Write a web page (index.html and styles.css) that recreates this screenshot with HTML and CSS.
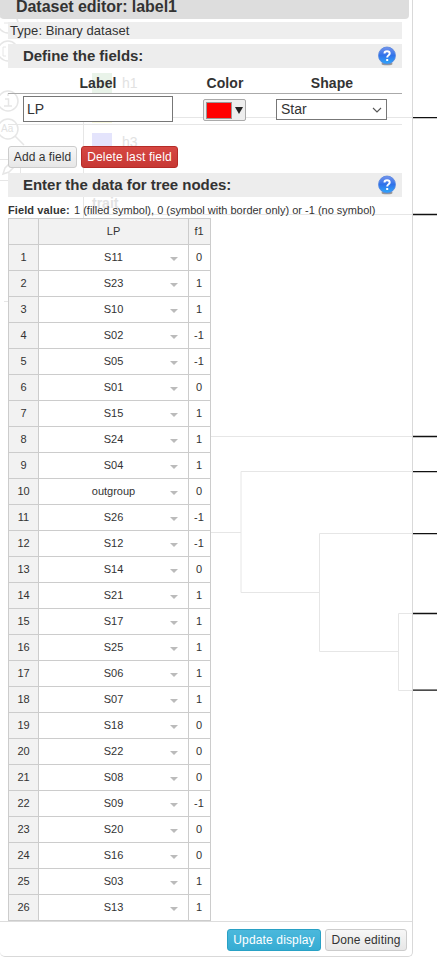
FILE: index.html
```html
<!DOCTYPE html>
<html lang="en">
<head>
<meta charset="utf-8">
<title>Dataset editor</title>
<link rel="stylesheet" href="styles.css">
</head>
<body>
<svg class="tree" width="437" height="979" viewBox="0 0 437 979" fill="none">
  <g class="faint">
    <rect x="92" y="73" width="20" height="20" fill="#e9f3e9"/>
    <rect x="92" y="103" width="20" height="20" fill="#fafae0"/>
    <rect x="92" y="133" width="20" height="20" fill="#e4e4fc"/>
    <path d="M83.500 118V218M83 117.500H412M8 124.500H402M83 214.500H412M0 159.500H20M20.500 159V180M0 180.500H8"/>
    <circle cx="8" cy="23" r="10"/><path d="M4 23H12"/>
    <circle cx="8" cy="51" r="10"/><path d="M6 47H3V56H6M9 47H12V56H9"/>
    <circle cx="8" cy="101" r="10"/><path class="bold" d="M5 99H8.500V106M4 106H12M8 93.500V96"/>
    <circle cx="8" cy="129" r="10"/><path class="bold" d="M15 136L24 145"/>
    <path class="bold" d="M3 174L5 168L13 160L17 164L9 172ZM11 162L15 166"/>
    <path d="M4 301.500H8"/>
    <path d="M211 436.500H412M211 532.500H241M412 471.500H241V592.500H319.500M412 533.500H319.500V651.500H398.500M412 613.500H398.500V690.500H412"/>
  </g>
  <g class="branches"><path d="M413 117.600H437M413 214.500H437M413 436.500H437M413 471.700H437M413 533.700H437M413 613.500H437M413 690.200H437"/></g>
  <g class="legend"><text x="122" y="88">h1</text><text x="122" y="147">h3</text><text class="small" x="1" y="132">Aa</text><text class="trait" x="92" y="208">trait</text></g>
</svg>
<main class="dialog">
  <h1 class="title">Dataset editor: label1</h1>
  <div class="content">
    <div class="type">Type: Binary dataset</div>
    <div class="section"><h2>Define the fields:</h2>
      <svg class="help" width="20" height="20" viewBox="0 0 20 20"><defs><linearGradient id="blue" x1="0" y1="0" x2="0" y2="1"><stop stop-color="#7593ec"/><stop offset=".5" stop-color="#2f72ea"/><stop offset="1" stop-color="#2fa8fa"/></linearGradient></defs><ellipse cx="10" cy="17.800" rx="5.500" ry="1.500" fill="#999"/><circle cx="10" cy="9.500" r="8.500" fill="url(#blue)" stroke="#5585dd" stroke-width=".8"/><path d="M7.500 7.500Q7.500 5.300 10 5.300Q12.700 5.300 12.700 7.500Q12.700 8.700 11.300 9.500Q10.200 10.100 10.200 11.500M10.200 13V15" fill="none" stroke="#fff" stroke-width="2"/></svg>
    </div>
    <div class="fields head"><b>Label</b><b>Color</b><b>Shape</b></div>
    <div class="fields controls">
      <div class="text-input">LP</div>
      <div class="color"><span class="swatch"></span><span class="arrow"></span></div>
      <div class="select">Star<svg width="10" height="6" viewBox="0 0 10 6"><path d="M1 1L5 5L9 1" fill="none" stroke="#555" stroke-width="1.100"/></svg></div>
    </div>
    <div class="actions"><span class="btn add">Add a field</span><span class="btn danger">Delete last field</span></div>
    <div class="section"><h2>Enter the data for tree nodes:</h2>
      <svg class="help" width="20" height="20" viewBox="0 0 20 20"><ellipse cx="10" cy="17.800" rx="5.500" ry="1.500" fill="#999"/><circle cx="10" cy="9.500" r="8.500" fill="url(#blue)" stroke="#5585dd" stroke-width=".8"/><path d="M7.500 7.500Q7.500 5.300 10 5.300Q12.700 5.300 12.700 7.500Q12.700 8.700 11.300 9.500Q10.200 10.100 10.200 11.500M10.200 13V15" fill="none" stroke="#fff" stroke-width="2"/></svg>
    </div>
    <div class="hint"><b>Field value:</b><span>1 (filled symbol), 0 (symbol with border only) or -1 (no symbol)</span></div>
    <table class="grid">
      <thead><tr><th></th><th>LP</th><th>f1</th></tr></thead>
      <tbody>
        <tr><th>1</th><td class="node">S11</td><td>0</td></tr>
        <tr><th>2</th><td class="node">S23</td><td>1</td></tr>
        <tr><th>3</th><td class="node">S10</td><td>1</td></tr>
        <tr><th>4</th><td class="node">S02</td><td>-1</td></tr>
        <tr><th>5</th><td class="node">S05</td><td>-1</td></tr>
        <tr><th>6</th><td class="node">S01</td><td>0</td></tr>
        <tr><th>7</th><td class="node">S15</td><td>1</td></tr>
        <tr><th>8</th><td class="node">S24</td><td>1</td></tr>
        <tr><th>9</th><td class="node">S04</td><td>1</td></tr>
        <tr><th>10</th><td class="node">outgroup</td><td>0</td></tr>
        <tr><th>11</th><td class="node">S26</td><td>-1</td></tr>
        <tr><th>12</th><td class="node">S12</td><td>-1</td></tr>
        <tr><th>13</th><td class="node">S14</td><td>0</td></tr>
        <tr><th>14</th><td class="node">S21</td><td>1</td></tr>
        <tr><th>15</th><td class="node">S17</td><td>1</td></tr>
        <tr><th>16</th><td class="node">S25</td><td>1</td></tr>
        <tr><th>17</th><td class="node">S06</td><td>1</td></tr>
        <tr><th>18</th><td class="node">S07</td><td>1</td></tr>
        <tr><th>19</th><td class="node">S18</td><td>0</td></tr>
        <tr><th>20</th><td class="node">S22</td><td>0</td></tr>
        <tr><th>21</th><td class="node">S08</td><td>0</td></tr>
        <tr><th>22</th><td class="node">S09</td><td>-1</td></tr>
        <tr><th>23</th><td class="node">S20</td><td>0</td></tr>
        <tr><th>24</th><td class="node">S16</td><td>0</td></tr>
        <tr><th>25</th><td class="node">S03</td><td>1</td></tr>
        <tr><th>26</th><td class="node">S13</td><td>1</td></tr>
      </tbody>
    </table>
  </div>
  <footer class="footer"><span class="btn info">Update display</span><span class="btn done">Done editing</span></footer>
</main>
</body>
</html>
```
FILE: styles.css
```css
* { box-sizing: border-box; }
body { margin: 0; height: 979px; overflow: hidden; background: #fff; color: #333; font-family: "Liberation Sans", Arial, sans-serif; }
.tree { position: absolute; left: 0; top: 0; }
.faint { stroke: #e6e6e6; stroke-width: 1; }
.faint rect { stroke: none; }
.faint circle, .faint .bold { stroke-width: 1.5; }
.branches { stroke: #111; stroke-width: 1.3; }
.legend { fill: #e2e2e2; font-size: 14px; }
.legend .small { font-size: 10px; }
.legend .trait { font-size: 14px; font-weight: bold; }
.dialog { position: relative; width: 413px; height: 957px; border: solid #d9d9d9; border-width: 0 1px 1px 0; border-radius: 0 0 5px 5px; }
.title { margin: 0; width: 409px; height: 19px; padding-left: 16px; background: #ddd; border-radius: 0 0 4px 4px; font-size: 16px; line-height: 13px; letter-spacing: -.04px; white-space: nowrap; }
.content { padding: 3px 10px 0 8px; height: 902px; }
.type { height: 17px; padding-left: 2px; background: #eee; font-size: 13px; letter-spacing: .05px; line-height: 17px; }
.section { display: flex; justify-content: space-between; align-items: center; height: 24px; margin-top: 5px; padding: 0 5px 0 15px; background: #ededed; }
.section h2 { margin: 0; font-size: 15px; letter-spacing: -.03px; line-height: 24px; }
.help { display: block; }
.fields { display: grid; grid-template-columns: 180px 74px 140px; }
.head { height: 26px; padding-top: 4px; border-bottom: 1px solid #aaa; text-align: center; font-size: 14px; letter-spacing: .1px; line-height: 22px; }
.controls { padding-top: 2px; height: 52px; align-items: start; }
.text-input { width: 150px; height: 26px; margin-left: 15px; padding-left: 3px; border: 1px solid #777; background: #fff; font-size: 14px; line-height: 24px; }
.color { display: flex; align-items: center; width: 43px; height: 22px; margin: 3px 0 0 15px; padding-left: 2px; border: 1px solid #aaa; border-radius: 2px; background: #eee; }
.swatch { width: 26px; height: 17px; border: 1px solid #999; background: red; }
.arrow { margin-left: 3px; border: solid transparent; border-width: 7px 4px 0; border-top-color: #222; }
.select { display: flex; align-items: center; justify-content: space-between; width: 111px; height: 21px; margin: 3px 0 0 14px; padding: 0 4px; border: 1px solid #777; background: #fff; font-size: 14px; line-height: 19px; }
.actions { display: flex; gap: 4px; height: 22px; }
.btn { height: 22px; border: 1px solid #ccc; border-radius: 3px; background: linear-gradient(#f7f7f7, #e7e7e7); text-align: center; font-size: 12px; letter-spacing: .15px; line-height: 20px; white-space: nowrap; }
.add { width: 69px; letter-spacing: .05px; }
.danger { width: 97px; border-color: #b52b27; background: linear-gradient(#d64742, #c73834); color: #fff; }
.hint { display: flex; gap: 4px; height: 21px; font-size: 11px; line-height: 26px; white-space: nowrap; }
.hint b { width: 62px; letter-spacing: .1px; }
.grid { width: 203px; border-collapse: separate; border-spacing: 0; table-layout: fixed; border: solid #ccc; border-width: 1px 0 0 1px; font-size: 11px; background: #fff; }
.grid th, .grid td { height: 26px; padding: 0; border: solid #ccc; border-width: 0 1px 1px 0; text-align: center; font-weight: normal; line-height: 25px; }
.grid td:last-child, .grid th:last-child { padding-right: 1px; }
.grid th { background: #f2f2f2; }
.grid th:first-child { width: 30px; }
.grid th:nth-child(2) { width: 150px; }
.grid .node::after { content: ""; float: right; width: 0; height: 0; margin: 12px 10px 0 -18px; border: solid transparent; border-width: 4px 4px 0; border-top-color: #bbb; }
.footer { display: flex; justify-content: flex-end; gap: 4px; height: 35px; padding: 7px 5px 0 0; border-top: 1px solid #ddd; }
.info { width: 94px; border-color: #28a1c5; background: linear-gradient(#4bb8dc, #36acd3); color: #fff; }
.done { width: 82px; }
```
